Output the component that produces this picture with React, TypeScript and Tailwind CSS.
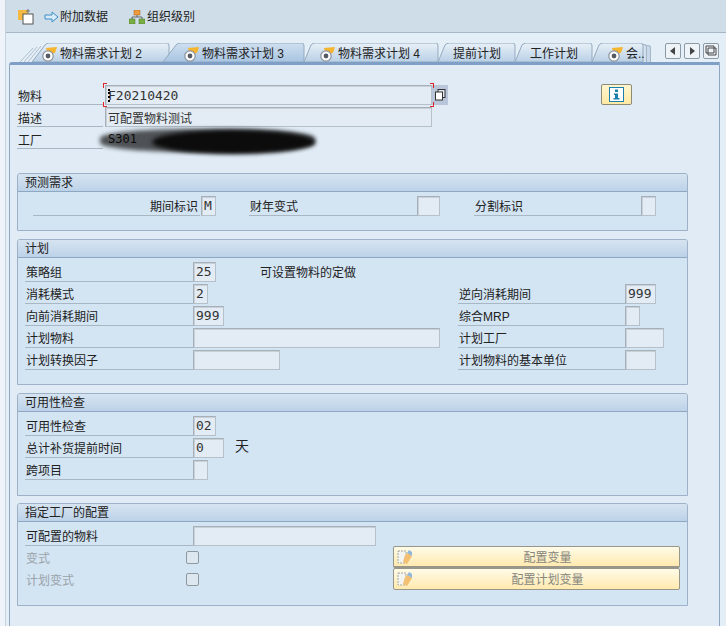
import React from 'react';

const fieldCls =
  'h-[20px] shrink-0 border border-[#a7b0b8] border-b-[#b4c0ca] border-r-[#b4c0ca] bg-[#e3ecf4] shadow-[inset_1px_1px_0_#c9d1d8] pl-[2px] overflow-hidden whitespace-nowrap text-[13px] leading-[18px] text-[#333] font-["DejaVu_Sans_Mono",monospace]';

const Field: React.FC<{ w: number; value?: string }> = ({ w, value }) => (
  <div className={fieldCls} style={{ width: w }}>
    {value}
  </div>
);

const Label: React.FC<{ w: number; text: string; right?: boolean; low?: boolean }> = ({ w, text, right, low }) => (
  <div
    className={`h-[22px] shrink-0 border-b border-[#a9b7c4] pl-[1px] pr-[2px] text-[12px] leading-[16px] text-[#222] ${low ? 'pt-[6px]' : 'pt-[5px]'} ${right ? 'text-right' : ''}`}
    style={{ width: w }}
  >
    {text}
  </div>
);

const Section: React.FC<{ title: string; h: number; children: React.ReactNode }> = ({ title, h, children }) => (
  <div
    className="ml-[7px] w-[671px] overflow-hidden rounded-t-[3px] border border-[#9db2c8] bg-[#d3e4f2]"
    style={{ height: h }}
  >
    <div className="h-[18px] border-b border-[#8fa8c1] bg-gradient-to-b from-[#d6e4f1] to-[#bdd2e8] pl-[7px] text-[12px] leading-[18px] text-[#222]">
      {title}
    </div>
    {children}
  </div>
);

const TabIcon = () => (
  <svg width="16" height="15" viewBox="0 0 16 15" className="shrink-0">
    <path d="M4 1 L15 0 L13 6 L6 7 Z" fill="#f5b52e" />
    <circle cx="6" cy="9" r="5.2" fill="#fff" stroke="#8a9099" strokeWidth="1.2" />
    <circle cx="6" cy="9" r="2.4" fill="#555c66" />
  </svg>
);

const Tab: React.FC<{
  w: number;
  slope: number;
  pl: number;
  text: string;
  icon?: boolean;
  active?: boolean;
  ml?: number;
  stacked?: boolean;
}> = ({ w, slope, pl, text, icon, active, ml = 0, stacked }) => {
  const x0 = stacked ? 12 : 0;
  return (
    <div className={`relative h-[19px] shrink-0 ${active ? 'z-10' : ''}`} style={{ width: w, marginLeft: ml }}>
      <svg width={w} height="19" className="absolute left-0 top-0">
        <defs>
          <linearGradient id={active ? 'tabA' : 'tabI'} x1="0" y1="0" x2="0" y2="1">
            <stop offset="0" stopColor={active ? '#cfdfef' : '#e8f0f7'} />
            <stop offset="1" stopColor={active ? '#a8c5e2' : '#b9d0e6'} />
          </linearGradient>
        </defs>
        {stacked && (
          <>
            <path d="M0 19 L13 5" stroke="#aebfd0" fill="none" />
            <path d="M4 19 L17 4" stroke="#aebfd0" fill="none" />
            <path d="M8 19 L21 3" stroke="#aebfd0" fill="none" />
          </>
        )}
        <path
          d={`M${x0} 19 L${x0 + slope - 2} 2 Q${x0 + slope} 0 ${x0 + slope + 2} 0 L${w - 3} 0 Q${w - 1} 0 ${w - 1} 3 L${w - 1} 19 Z`}
          fill={`url(#${active ? 'tabA' : 'tabI'})`}
          stroke="#93a9bf"
        />
      </svg>
      <div
        className="relative flex h-[19px] items-center gap-[2px] overflow-hidden whitespace-nowrap pt-[3px] text-[12px] leading-[16px] text-[#222]"
        style={{ paddingLeft: pl }}
      >
        {icon && <TabIcon />}
        <span>{text}</span>
      </div>
    </div>
  );
};

const NavBtn: React.FC<{ children: React.ReactNode }> = ({ children }) => (
  <div className="flex h-[16px] w-[16px] items-center justify-center rounded-[2px] border border-[#8c9aa8] bg-[#eef3f8]">
    {children}
  </div>
);

const NoteIcon = () => (
  <svg width="16" height="16" viewBox="0 0 16 16" className="absolute left-[3px] top-[2px]">
    <rect x="1" y="2" width="8" height="12" fill="#f3f3f0" stroke="#a8a8a0" strokeWidth="1" strokeDasharray="2 1" />
    <path d="M8 6 L12 3 L15 7 L10 15 L6 13 Z" fill="#f2bf73" />
    <path d="M10 4 L12 1 L15 3 L15 7 L12 5 Z" fill="#8fb8dc" />
  </svg>
);

const YellowBtn: React.FC<{ text: string; thick?: boolean }> = ({ text, thick }) => (
  <div
    className={`relative h-[22px] w-[287px] shrink-0 rounded-[2px] border border-[#98968a] bg-gradient-to-b from-[#fffbe8] to-[#ffe9ae] pl-[22px] text-center text-[12px] leading-[23px] text-[#86867c] ${thick ? 'border-b-2' : ''}`}
  >
    <NoteIcon />
    {text}
  </div>
);

const CheckRow: React.FC<{ text: string; btn: string; thick?: boolean }> = ({ text, btn, thick }) => (
  <div className="flex h-[22px]">
    <div className="flex w-[368px] shrink-0 items-center">
      <div className="w-[161px] pl-[1px] pt-[3px] text-[12px] leading-[16px] text-[#9aa3aa]">{text}</div>
      <div className="h-[13px] w-[13px] rounded-[2px] border border-[#8e989f] bg-[#dde7f0]" />
    </div>
    <YellowBtn text={btn} thick={thick} />
  </div>
);

type PlanRow = { label: string; w: number; value?: string; note?: string; rLabel?: string; rw?: number; rValue?: string };

const planRows: PlanRow[] = [
  { label: '策略组', w: 23, value: '25', note: '可设置物料的定做' },
  { label: '消耗模式', w: 15, value: '2', rLabel: '逆向消耗期间', rw: 31, rValue: '999' },
  { label: '向前消耗期间', w: 31, value: '999', rLabel: '综合MRP', rw: 15 },
  { label: '计划物料', w: 247, rLabel: '计划工厂', rw: 39 },
  { label: '计划转换因子', w: 87, rLabel: '计划物料的基本单位', rw: 31 },
];

export default function App() {
  return (
    <div className="h-[626px] w-[726px] overflow-hidden bg-[#eef4f9] font-['Liberation_Sans','Noto_Sans_CJK_SC',sans-serif]">
      <div className="ml-[5px] h-full border-l border-[#c6d3df] bg-[#e4eef6]">
        {/* toolbar */}
        <div className="flex h-[33px] items-center border-b border-[#a8b7c6] bg-[#cfdde8] pt-[1px] text-[12px] text-[#222]">
          <svg width="17" height="17" viewBox="0 0 17 17" className="ml-[12px] shrink-0">
            <rect x="0" y="2" width="10" height="10" fill="#f5b840" />
            <rect x="5" y="6" width="10" height="10" fill="#fff" stroke="#555" strokeWidth="1" />
            <path d="M10 1 V5 M8 3 H12" stroke="#777" strokeWidth="1" />
          </svg>
          <svg width="15" height="12" viewBox="0 0 15 12" className="ml-[9px] shrink-0">
            <path d="M1 4 H8 V1 L14 6 L8 11 V8 H1 Z" fill="#d6eaf8" stroke="#3d8cc4" strokeWidth="1" />
          </svg>
          <span className="ml-[1px]">附加数据</span>
          <svg width="16" height="14" viewBox="0 0 16 14" className="ml-[21px] shrink-0">
            <rect x="5" y="0" width="6" height="5" fill="#ef9a3c" stroke="#a86418" strokeWidth="0.5" />
            <path d="M8 5 V7 M3 9 V7 H13 V9" stroke="#666" fill="none" />
            <rect x="0" y="9" width="6" height="5" fill="#79ad45" stroke="#4c7a22" strokeWidth="0.5" />
            <rect x="10" y="9" width="6" height="5" fill="#79ad45" stroke="#4c7a22" strokeWidth="0.5" />
          </svg>
          <span className="ml-[2px]">组织级别</span>
        </div>

        {/* tab strip */}
        <div className="ml-[3px] flex h-[29px] w-[711px] items-start pl-[11px] pr-[1px] pt-[10px]">
          <Tab w={150} slope={15} pl={22} text="物料需求计划 2" icon stacked />
          <Tab w={142} slope={15} pl={21} text="物料需求计划 3" icon active ml={-7} />
          <Tab w={135} slope={9} pl={16} text="物料需求计划 4" icon ml={-1} />
          <Tab w={78} slope={9} pl={15} text="提前计划" ml={-1} />
          <Tab w={78} slope={9} pl={15} text="工作计划" ml={-1} />
          <div className="relative ml-[-1px] h-[19px] w-[59px] shrink-0">
            <div className="absolute left-[50px] top-[2px] h-[17px] w-[9px] rounded-tr-[3px] border-r border-t border-[#a5b7c9] bg-[#c9d9e9]" />
            <div className="absolute left-[46px] top-[1px] h-[18px] w-[9px] rounded-tr-[3px] border-r border-t border-[#a5b7c9] bg-[#d2e0ee]" />
            <Tab w={52} slope={9} pl={16} text="会.." icon />
          </div>
          <div className="ml-auto flex gap-[3px]">
            <NavBtn>
              <svg width="6" height="8" viewBox="0 0 6 8"><path d="M5 0 V8 L0 4 Z" fill="#444" /></svg>
            </NavBtn>
            <NavBtn>
              <svg width="6" height="8" viewBox="0 0 6 8"><path d="M1 0 V8 L6 4 Z" fill="#444" /></svg>
            </NavBtn>
            <NavBtn>
              <svg width="12" height="12" viewBox="0 0 12 12">
                <path d="M1 1 H9 V3 H11 V10 H3 V8 H1 Z M3 3 H9 V8 H3 Z" fill="none" stroke="#444" />
              </svg>
            </NavBtn>
          </div>
        </div>

        {/* panel */}
        <div className="ml-[3px] h-[570px] w-[711px] rounded-tl-[3px] border-x border-t-[3px] border-x-[#8ea6c0] border-t-[#7f9fc6] bg-[#e0ebf5] pt-[18px]">
          {/* header fields */}
          <div className="relative ml-[7px] h-[66px]">
            <div className="flex h-[22px] items-end">
              <Label w={86} text="物料" low />
              <div className="relative ml-[2px] flex items-end">
                <div className={`${fieldCls} relative !leading-[20px]`} style={{ width: 327 }}>
                  <span className="absolute left-[2px] top-[3px] h-[13px] w-[1px] border-l-2 border-dotted border-black" />
                  F20210420
                </div>
                <div className="absolute -left-[2px] -top-[2px] h-[5px] w-[4px] border-l border-t border-[#e0242c]" />
                <div className="absolute -bottom-[2px] -left-[2px] h-[5px] w-[4px] border-b border-l border-[#e0242c]" />
                <div className="absolute -right-[2px] -top-[2px] h-[5px] w-[4px] border-r border-t border-[#e0242c]" />
                <div className="absolute -bottom-[2px] -right-[2px] h-[5px] w-[4px] border-b border-r border-[#e0242c]" />
              </div>
              <div className="flex h-[20px] w-[16px] items-center justify-center bg-[#b9c6d9]">
                <svg width="11" height="12" viewBox="0 0 11 12">
                  <rect x="3" y="0.5" width="7" height="8" fill="#dfe6ee" stroke="#333" />
                  <rect x="0.5" y="3" width="7" height="8" fill="#fff" stroke="#333" />
                </svg>
              </div>
              <div className="relative ml-[153px] flex h-[21px] w-[31px] items-center justify-center self-end rounded-[2px] border border-[#8d8b76] bg-gradient-to-b from-[#fff6cf] to-[#ffe9a3]">
                <svg width="15" height="15" viewBox="0 0 15 15">
                  <rect x="0.5" y="0.5" width="14" height="14" fill="#fff" stroke="#1d7fae" />
                  <rect x="6" y="2.5" width="3" height="2.5" fill="#1d7fae" />
                  <path d="M5 6.5 H9 V11 H10.5 V12.5 H4.5 V11 H6 V8 H5 Z" fill="#1d7fae" />
                </svg>
              </div>
            </div>
            <div className="flex h-[22px] items-end">
              <Label w={86} text="描述" low />
              <div className="ml-[2px]">
                <div className={`${fieldCls} !font-['Noto_Sans_CJK_SC',sans-serif] !text-[12px] !leading-[19px]`} style={{ width: 327 }}>
                  可配置物料测试
                </div>
              </div>
            </div>
            <div className="flex h-[22px] items-end">
              <Label w={86} text="工厂" low />
              <div className="ml-[5px] self-center pt-[2px] font-['DejaVu_Sans_Mono',monospace] text-[12px] text-[#222]">S301</div>
            </div>
            {/* scribbled out plant name */}
            <div className="absolute left-[83px] top-[46px] h-[23px] w-[215px] rounded-[40%] bg-black/65 blur-[2px]" />
            <div className="absolute left-[135px] top-[47px] h-[24px] w-[163px] rounded-[50%] bg-[#0c0c0c] blur-[2px]" />
          </div>

          <div className="h-[24px]" />
          <Section title="预测需求" h={58}>
            <div className="flex items-end pl-[15px] pt-[2px]">
              <Label w={167} text="期间标识" right />
              <div className="ml-[1px]">
                <Field w={15} value="M" />
              </div>
              <div className="ml-[33px]">
                <Label w={168} text="财年变式" />
              </div>
              <Field w={23} />
              <div className="ml-[34px]">
                <Label w={167} text="分割标识" />
              </div>
              <Field w={15} />
            </div>
          </Section>

          <div className="h-[8px]" />
          <Section title="计划" h={146}>
            <div className="pl-[7px] pt-[2px]">
              {planRows.map((r) => (
                <div key={r.label} className="flex h-[22px] items-end">
                  <div className="flex w-[433px] shrink-0 items-end">
                    <Label w={168} text={r.label} />
                    <Field w={r.w} value={r.value} />
                    {r.note && <div className="ml-[44px] text-[12px] leading-[18px] text-[#222]">{r.note}</div>}
                  </div>
                  {r.rLabel && (
                    <>
                      <Label w={167} text={r.rLabel} />
                      <Field w={r.rw ?? 0} value={r.rValue} />
                    </>
                  )}
                </div>
              ))}
            </div>
          </Section>

          <div className="h-[8px]" />
          <Section title="可用性检查" h={103}>
            <div className="pl-[7px] pt-[2px]">
              <div className="flex h-[22px] items-end">
                <Label w={168} text="可用性检查" />
                <Field w={23} value="02" />
              </div>
              <div className="flex h-[22px] items-end">
                <Label w={168} text="总计补货提前时间" />
                <Field w={31} value="0" />
                <div className="ml-[11px] pb-[2px] text-[14px] leading-[20px] text-[#222]">天</div>
              </div>
              <div className="flex h-[22px] items-end">
                <Label w={168} text="跨项目" />
                <Field w={15} />
              </div>
            </div>
          </Section>

          <div className="h-[7px]" />
          <Section title="指定工厂的配置" h={103}>
            <div className="pl-[7px] pt-[2px]">
              <div className="flex h-[22px] items-end">
                <Label w={168} text="可配置的物料" />
                <Field w={183} />
              </div>
              <CheckRow text="变式" btn="配置变量" thick />
              <CheckRow text="计划变式" btn="配置计划变量" />
            </div>
          </Section>
        </div>
      </div>
    </div>
  );
}
